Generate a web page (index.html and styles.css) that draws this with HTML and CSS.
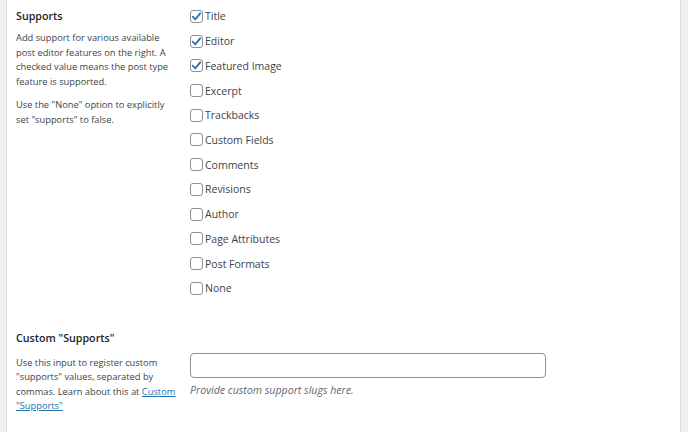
FILE: index.html
```html
<!DOCTYPE html>
<html>
<head>
<meta charset="utf-8">
<link rel="stylesheet" href="styles.css">
</head>
<body>
<div class="panel">
  <div class="row row-supports">
    <div class="label-col">
      <div class="heading">Supports</div>
      <p class="desc">Add support for various available post editor features on the right. A checked value means the post type feature is supported.</p>
      <p class="desc desc-second">Use the "None" option to explicitly set "supports" to false.</p>
    </div>
    <div class="field-col">
      <ul class="options">
        <li class="opt"><span class="box checked"><svg viewBox="0 0 14 14" class="tick"><path d="M3 7.2 L5.8 10 L11 3.6" /></svg></span><span class="opt-label">Title</span></li>
        <li class="opt"><span class="box checked"><svg viewBox="0 0 14 14" class="tick"><path d="M3 7.2 L5.8 10 L11 3.6" /></svg></span><span class="opt-label">Editor</span></li>
        <li class="opt"><span class="box checked"><svg viewBox="0 0 14 14" class="tick"><path d="M3 7.2 L5.8 10 L11 3.6" /></svg></span><span class="opt-label">Featured Image</span></li>
        <li class="opt"><span class="box"></span><span class="opt-label">Excerpt</span></li>
        <li class="opt"><span class="box"></span><span class="opt-label">Trackbacks</span></li>
        <li class="opt"><span class="box"></span><span class="opt-label">Custom Fields</span></li>
        <li class="opt"><span class="box"></span><span class="opt-label">Comments</span></li>
        <li class="opt"><span class="box"></span><span class="opt-label">Revisions</span></li>
        <li class="opt"><span class="box"></span><span class="opt-label">Author</span></li>
        <li class="opt"><span class="box"></span><span class="opt-label">Page Attributes</span></li>
        <li class="opt"><span class="box"></span><span class="opt-label">Post Formats</span></li>
        <li class="opt"><span class="box"></span><span class="opt-label">None</span></li>
      </ul>
    </div>
  </div>
  <div class="row row-custom">
    <div class="label-col">
      <div class="heading">Custom "Supports"</div>
      <p class="desc">Use this input to register custom "supports" values, separated by commas. Learn about this at <a href="#" class="link">Custom</a> <a href="#" class="link">"Supports"</a></p>
    </div>
    <div class="field-col field-custom">
      <div class="text-input"></div>
      <p class="hint">Provide custom support slugs here.</p>
    </div>
  </div>
</div>
</body>
</html>
```

FILE: styles.css
```css
html, body {
  margin: 0;
  padding: 0;
  background: #f0f0f1;
  height: 432px;
  overflow: hidden;
}
body {
  font-family: "Open Sans", "Noto Sans", sans-serif;
  color: #3c434a;
}
.panel {
  margin: 0 7px 0 6px;
  background: #ffffff;
  border-left: 1px solid #dcdcde;
  border-right: 1px solid #dcdcde;
  height: 432px;
  box-sizing: border-box;
  padding-left: 9px;
}
.row {
  display: grid;
  grid-template-columns: 174px 356px;
}
.row-supports {
  padding-top: 4px;
}
.heading {
  font-size: 10.7px;
  font-weight: 600;
  color: #1d2327;
  line-height: 24px;
  height: 24px;
}
.desc {
  width: 162px;
  font-size: 9.3px;
  line-height: 14.5px;
  margin: 3px 0 0 0;
  color: #3c434a;
}
.desc-second {
  margin-top: 9px;
}
.options {
  list-style: none;
  margin: 0;
  padding: 0;
}
.opt {
  display: flex;
  align-items: center;
  height: 24.73px;
}
.box {
  width: 13px;
  height: 13px;
  box-sizing: border-box;
  border: 1px solid #8c8f94;
  border-radius: 3px;
  background: #fff;
  margin-right: 2px;
  display: flex;
  align-items: center;
  justify-content: center;
}
.tick {
  width: 13px;
  height: 13px;
  flex: none;
}
.tick path {
  fill: none;
  stroke: #2271b1;
  stroke-width: 2;
  stroke-linecap: round;
  stroke-linejoin: round;
}
.opt-label {
  font-size: 10.5px;
  color: #3c434a;
}
.row-custom {
  padding-top: 25px;
}
.row-custom .desc {
  margin-top: 6px;
}
.field-custom {
  padding-top: 27px;
}
.text-input {
  width: 356px;
  height: 25px;
  box-sizing: border-box;
  border: 1px solid #8c8f94;
  border-radius: 4px;
  background: #fff;
}
.hint {
  margin: 4px 0 0 0;
  font-size: 10.6px;
  font-style: italic;
  color: #646970;
  line-height: 16px;
}
.link {
  color: #2271b1;
  text-decoration: underline;
}
```
